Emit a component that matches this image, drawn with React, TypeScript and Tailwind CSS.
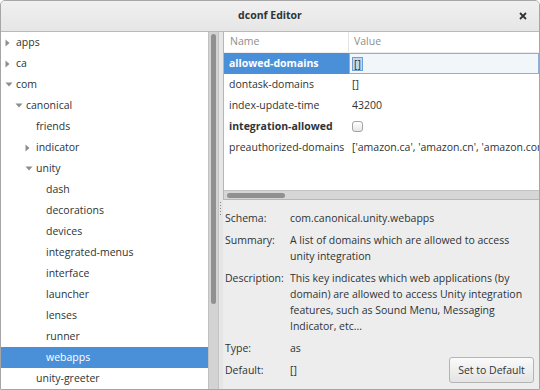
import React from 'react';

type Node = { name: string; level: number; arrow?: 'open' | 'closed'; selected?: boolean };

const tree: Node[] = [
  { name: 'apps', level: 0, arrow: 'closed' },
  { name: 'ca', level: 0, arrow: 'closed' },
  { name: 'com', level: 0, arrow: 'open' },
  { name: 'canonical', level: 1, arrow: 'open' },
  { name: 'friends', level: 2 },
  { name: 'indicator', level: 2, arrow: 'closed' },
  { name: 'unity', level: 2, arrow: 'open' },
  { name: 'dash', level: 3 },
  { name: 'decorations', level: 3 },
  { name: 'devices', level: 3 },
  { name: 'integrated-menus', level: 3 },
  { name: 'interface', level: 3 },
  { name: 'launcher', level: 3 },
  { name: 'lenses', level: 3 },
  { name: 'runner', level: 3 },
  { name: 'webapps', level: 3, selected: true },
  { name: 'unity-greeter', level: 2 },
];

const indents = ['pl-[4px]', 'pl-[14px]', 'pl-[24px]', 'pl-[34px]'];

function Arrow({ kind }: { kind?: 'open' | 'closed' }) {
  return (
    <span className="w-[11px] h-[21px] flex items-center">
      {kind === 'closed' && (
        <svg width="5" height="8" viewBox="0 0 5 8">
          <path d="M0.5 0.5 L4.5 4 L0.5 7.5 Z" fill="#8b8e8f" />
        </svg>
      )}
      {kind === 'open' && (
        <svg width="8" height="5" viewBox="0 0 8 5">
          <path d="M0.5 0.5 L7.5 0.5 L4 4.5 Z" fill="#8b8e8f" />
        </svg>
      )}
    </span>
  );
}

const keys = [
  { name: 'allowed-domains', value: '[]', bold: true, selected: true },
  { name: 'dontask-domains', value: '[]' },
  { name: 'index-update-time', value: '43200' },
  { name: 'integration-allowed', value: 'check', bold: true },
  { name: 'preauthorized-domains', value: "['amazon.ca', 'amazon.cn', 'amazon.com', 'amazon.co.uk']" },
];

export default function App() {
  return (
    <div className="w-[540px] h-[390px] flex flex-col border border-[#a6a6a6] rounded-t-[5px] bg-[#ededed] overflow-hidden font-['Open_Sans',sans-serif] text-[10.5px] text-[#2e3436]">
      {/* Title bar */}
      <div className="relative h-[31px] shrink-0 flex items-center justify-center bg-gradient-to-b from-[#f0f0f0] to-[#e6e6e6] border-b border-[#b9b9b9]">
        <span className="font-bold">dconf Editor</span>
        <svg className="absolute right-[12px] top-[11px]" width="8" height="8" viewBox="0 0 8 8">
          <path d="M1 1 L7 7 M7 1 L1 7" stroke="#2e3436" strokeWidth="1.8" />
        </svg>
      </div>

      <div className="flex flex-1 min-h-0">
        {/* Tree */}
        <div className="w-[218px] shrink-0 flex bg-white border-r border-[#c4c4c4]">
          <div className="flex-1 flex flex-col">
            {tree.map((n) => (
              <div
                key={n.name}
                className={`h-[21px] shrink-0 flex items-center ${indents[n.level]} ${
                  n.selected ? 'bg-[#4a90d9] text-white' : ''
                }`}
              >
                <Arrow kind={n.arrow} />
                <span>{n.name}</span>
              </div>
            ))}
          </div>
          <div className="w-[10px] bg-[#d3d3d3] border-l border-[#c0c0c0] pt-[2px] px-[2px]">
            <div className="h-[270px] rounded-[3px] bg-[#8f9090]" />
          </div>
        </div>

        {/* Pane handle */}
        <div className="w-[4px] shrink-0 bg-[#e6e6e6]" />

        {/* Right side */}
        <div className="flex-1 min-w-0 flex flex-col">
          <div className="h-[168px] shrink-0 flex flex-col bg-white border-l border-b border-[#b6b6b6] overflow-hidden">
            <div className="h-[21px] shrink-0 flex items-center text-[#8d8f8a] border-b border-[#ededed]">
              <div className="w-[125px] h-full flex items-center pl-[6px] border-r border-[#e3e3e3]">Name</div>
              <div className="pl-[5px]">Value</div>
            </div>
            <div className="flex-1 flex flex-col">
              {keys.map((k) => (
                <div key={k.name} className="h-[21px] shrink-0 flex items-center">
                  <div
                    className={`w-[125px] h-full shrink-0 flex items-center pl-[5px] ${
                      k.bold ? 'font-bold' : ''
                    } ${k.selected ? 'bg-[#4a90d9] text-white' : ''}`}
                  >
                    {k.name}
                  </div>
                  {k.selected ? (
                    <div className="flex-1 h-full flex items-center pl-[2px] bg-[#f1f6fb] border border-[#8fb0d2]">
                      <span className="bg-[#c3d7ee] border border-[#6f9fd2] leading-[12px] px-[1px]">[]</span>
                    </div>
                  ) : k.value === 'check' ? (
                    <div className="pl-[3px] flex items-center">
                      <span className="w-[11px] h-[11px] rounded-[3px] border border-[#a3a3a3] bg-gradient-to-b from-white to-[#e6e6e6]" />
                    </div>
                  ) : (
                    <div className="pl-[3px] whitespace-nowrap">{k.value}</div>
                  )}
                </div>
              ))}
            </div>
            <div className="h-[9px] shrink-0 flex items-center bg-[#d6d6d6] border-t border-[#c2c2c2] px-[3px]">
              <div className="w-[58px] h-[5px] rounded-[3px] bg-[#8f9090]" />
            </div>
          </div>

          {/* Details */}
          <div className="relative flex-1 flex flex-col gap-[6px] pt-[10px] pl-[2px] leading-[16px]">
            <div className="absolute left-[-3px] top-[2px] flex flex-col gap-[2px]">
              {[0, 1, 2, 3, 4].map((i) => (
                <span key={i} className="w-[1px] h-[1px] bg-[#888]" />
              ))}
            </div>
            <div className="flex">
              <span className="w-[65px] shrink-0">Schema:</span>
              <span>com.canonical.unity.webapps</span>
            </div>
            <div className="flex">
              <span className="w-[65px] shrink-0">Summary:</span>
              <span className="w-[240px]">A list of domains which are allowed to access unity integration</span>
            </div>
            <div className="flex">
              <span className="w-[65px] shrink-0">Description:</span>
              <span className="w-[240px]">
                This key indicates which web applications (by domain) are allowed to access Unity integration
                features, such as Sound Menu, Messaging Indicator, etc...
              </span>
            </div>
            <div className="flex">
              <span className="w-[65px] shrink-0">Type:</span>
              <span>as</span>
            </div>
            <div className="flex items-center pr-[5px]">
              <span className="w-[65px] shrink-0">Default:</span>
              <span>[]</span>
              <button className="ml-auto -my-[5px] h-[26px] w-[85px] rounded-[3px] border border-[#b4b4b4] bg-gradient-to-b from-[#fafafa] to-[#e4e4e4] text-[#2e3436]">
                Set to Default
              </button>
            </div>
          </div>
        </div>
      </div>
    </div>
  );
}
